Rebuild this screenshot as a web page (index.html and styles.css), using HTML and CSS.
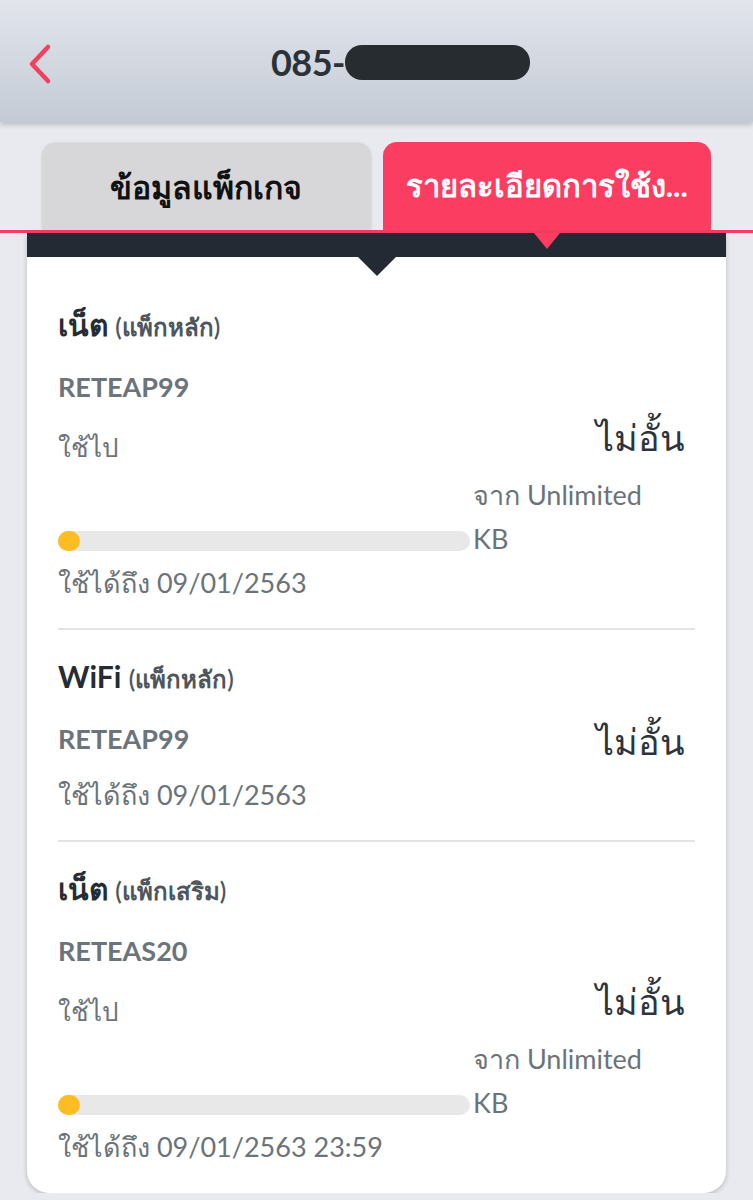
FILE: index.html
```html
<!DOCTYPE html>
<html lang="th">
<head>
    <meta charset="UTF-8">
    <meta name="viewport" content="width=device-width, initial-scale=1.0">
    <title>085-</title>
    <link rel="stylesheet" href="styles.css">
</head>
<body>
<header class="topBar">
    <svg class="backIcon" width="30" height="44" viewBox="0 0 30 44">
        <polyline points="20,5 4,22 20,39" fill="none" stroke="#f2405f" stroke-width="4.5" stroke-linecap="round" stroke-linejoin="round"/>
    </svg>
    <h1 class="phoneTitle">085-<span class="redacted"></span></h1>
</header>
<nav class="tabs">
    <div class="tab">ข้อมูลแพ็กเกจ</div>
    <div class="tab tabActive">รายละเอียดการใช้ง...</div>
</nav>
<main class="card">
    <div class="cardBar"></div>
    <section class="pack">
        <div class="packTitle">เน็ต <small>(แพ็กหลัก)</small></div>
        <div class="packCode">RETEAP99</div>
        <div class="usageRow">
            <span class="usedLabel">ใช้ไป</span>
            <span class="amount">ไม่อั้น</span>
        </div>
        <div class="barRow">
            <div class="bar"><div class="barFill" style="width: 22px"></div></div>
            <span class="quota">จาก Unlimited KB</span>
        </div>
        <div class="expiry">ใช้ได้ถึง 09/01/2563</div>
    </section>
    <section class="pack">
        <div class="packTitle">WiFi <small>(แพ็กหลัก)</small></div>
        <div class="codeRow">
            <span class="packCode">RETEAP99</span>
            <span class="amount amountTall">ไม่อั้น</span>
        </div>
        <div class="expiry">ใช้ได้ถึง 09/01/2563</div>
    </section>
    <section class="pack">
        <div class="packTitle">เน็ต <small>(แพ็กเสริม)</small></div>
        <div class="packCode">RETEAS20</div>
        <div class="usageRow">
            <span class="usedLabel">ใช้ไป</span>
            <span class="amount">ไม่อั้น</span>
        </div>
        <div class="barRow">
            <div class="bar"><div class="barFill" style="width: 22px"></div></div>
            <span class="quota">จาก Unlimited KB</span>
        </div>
        <div class="expiry">ใช้ได้ถึง 09/01/2563 23:59</div>
    </section>
</main>
</body>
</html>
```

FILE: styles.css
```css
body{
    margin: 0;
    background-color: #e9eaef;
    font-family: Lato, "Noto Sans", sans-serif;
    color: #6b737a;
}
.topBar{
    height: 122px;
    display: flex;
    align-items: center;
    justify-content: center;
    position: relative;
    background: linear-gradient(#e2e5ec, #c4cbd5);
    box-shadow: 0 3px 5px rgba(0, 0, 0, 0.18);
}
.backIcon{
    position: absolute;
    left: 28px;
    top: 42px;
}
.phoneTitle{
    margin: 2px 0 0 48px;
    display: flex;
    align-items: center;
    font-size: 36px;
    font-weight: bold;
    color: #2a3238;
    letter-spacing: -0.5px;
}
.redacted{
    display: inline-block;
    width: 185px;
    height: 35px;
    border-radius: 17px;
    background-color: #272c31;
}
.tabs{
    display: flex;
    gap: 12px;
    padding: 22px 42px 0 42px;
    border-bottom: 3px solid #f53d60;
}
.tab{
    width: 329px;
    height: 86px;
    display: flex;
    align-items: center;
    justify-content: center;
    border-radius: 14px 14px 0 0;
    background-color: #d7d7da;
    color: #111;
    font-size: 32px;
    font-weight: bold;
    box-shadow: 0 -1px 3px rgba(0, 0, 0, 0.15);
}
.tabActive{
    height: 88px;
    margin-top: -2px;
    background-color: #fb3d61;
    color: #fff;
    font-size: 31px;
    position: relative;
    box-shadow: none;
}
.tabActive::after{
    content: "";
    position: absolute;
    left: 50%;
    bottom: -19px;
    margin-left: -13px;
    border-left: 13px solid transparent;
    border-right: 13px solid transparent;
    border-top: 16px solid #fb3d61;
    z-index: 2;
}
.card{
    margin: 0 27px;
    background-color: #fff;
    border-radius: 0 0 22px 22px;
    box-shadow: 0 2px 5px rgba(0, 0, 0, 0.2);
    padding-bottom: 24px;
}
.cardBar{
    height: 24px;
    background-color: #242a33;
    position: relative;
    margin-bottom: 37px;
}
.cardBar::after{
    content: "";
    position: absolute;
    left: 50%;
    top: 24px;
    margin-left: -19px;
    border-left: 19px solid transparent;
    border-right: 19px solid transparent;
    border-top: 19px solid #242a33;
}
.pack{
    margin: 0 31px;
    padding: 16px 0 23px 0;
    border-bottom: 2px solid #e3e3e5;
}
.pack:first-of-type{
    padding-top: 0;
}
.pack:last-of-type{
    border-bottom: none;
    padding-bottom: 0;
}
.packTitle{
    line-height: 60px;
    font-size: 30px;
    font-weight: bold;
    color: #252c34;
}
.packTitle small{
    font-size: 24px;
    font-weight: 600;
    color: #4e565d;
}
.packCode{
    line-height: 60px;
    font-size: 27px;
    font-weight: bold;
    color: #6b737b;
}
.usageRow, .codeRow{
    display: flex;
    justify-content: space-between;
    align-items: flex-start;
}
.usageRow{
    height: 56px;
}
.usedLabel{
    padding-top: 4px;
    line-height: 52px;
    font-size: 26px;
}
.amount{
    line-height: 40px;
    font-size: 36px;
    color: #2d343b;
    padding-right: 10px;
}
.amountTall{
    line-height: 64px;
}
.barRow{
    display: flex;
    align-items: flex-end;
    gap: 3px;
}
.bar{
    width: 412px;
    height: 20px;
    margin-bottom: 10px;
    border-radius: 10px;
    background-color: #e8e8e9;
    flex-shrink: 0;
}
.barFill{
    height: 20px;
    border-radius: 10px;
    background-color: #fbbd22;
}
.quota{
    width: 195px;
    line-height: 44px;
    font-size: 27px;
}
.expiry{
    line-height: 44px;
    font-size: 27px;
}
```
